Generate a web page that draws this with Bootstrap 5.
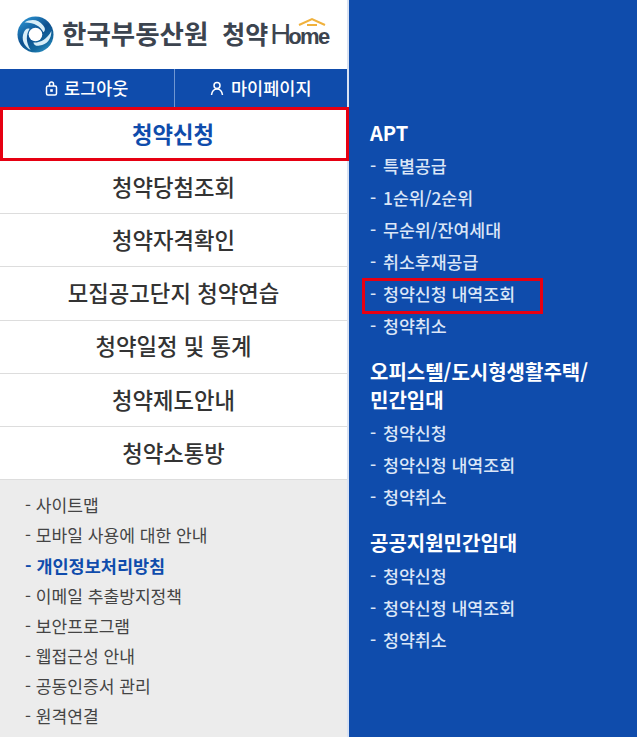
<!DOCTYPE html>
<html lang="ko">
<head>
<meta charset="utf-8">
<title>청약Home</title>
<link href="https://cdn.jsdelivr.net/npm/bootstrap@5.3.0/dist/css/bootstrap.min.css" rel="stylesheet">
<style>
html,body{height:737px;overflow:hidden}
body{font-family:"Noto Sans CJK KR","Noto Sans",sans-serif;background:#0f4cac;color:#333}
.shell{height:737px}
.leftcol{width:349px;flex:none;background:#fff;border-right:2px solid #d9e2f2}
.brandbar{height:69px;padding-left:17px;gap:8px}
.brandname{font-size:26.5px;font-weight:700;color:#3c444f;line-height:1;white-space:nowrap;display:flex;align-items:baseline}
.brandsub{margin-left:14px;margin-right:2px;font-size:25px}
.brandh{font-family:"Liberation Sans",sans-serif;font-weight:400;font-size:29px;letter-spacing:-3px}
.brandome{font-family:"Liberation Sans",sans-serif;font-weight:700;font-size:22px;letter-spacing:-1.6px}
.homeword{position:relative;display:inline-block}
.roof{position:absolute;right:3px;top:-3px}
.authbar{height:38px;background:#0f4cac}
.authlink{flex:1 1 50%;color:#fff;text-decoration:none;font-size:17.5px;font-weight:500;gap:6px}
.authlink+.authlink{border-left:1px solid #6f96d2;gap:7px}
.menuitem{display:flex;align-items:center;justify-content:center;height:53.2px;padding-bottom:1px;font-size:22.3px;font-weight:500;color:#333;text-decoration:none;border-bottom:1px solid #ddd}
.menuitem.current{color:#0f4cac;border:3px solid #e60012;font-weight:700;height:54px;margin-right:-2px;padding:0 3px 1px 0}
.footmenu{background:#ececec;flex:1;padding:10px 0 0 25px;border-top:1px solid #ddd;margin-top:-1px}
.footmenu a{display:block;height:30.2px;line-height:30px;font-size:17.1px;color:#444;text-decoration:none;white-space:nowrap}
.footmenu a.on{color:#0f4cac;font-weight:700;font-size:17.5px}
.rightcol{flex:1;color:#fff;padding:119px 0 0 21px;background:#0f4cac}
.grouptitle{font-size:20px;font-weight:700;line-height:28px;margin:0 0 3px;color:#fff}
.sublink{display:block;height:32px;line-height:32px;font-size:17.3px;font-weight:500;color:#dbe6f7;text-decoration:none;white-space:nowrap}
.sublink::first-letter{letter-spacing:2px}
.sublink.boxed{position:relative}
.boxed::after{content:"";position:absolute;left:-8px;top:0;width:181px;height:36px;border:3px solid #e60012;pointer-events:none}
.groupblock{margin-bottom:16px}
</style>
</head>
<body>
<div class="shell d-flex">
  <div class="leftcol d-flex flex-column">
    <div class="brandbar d-flex align-items-center">
      <svg width="37" height="37" viewBox="0 0 38 38">
        <defs><linearGradient id="lg" x1=".1" y1="0" x2=".8" y2="1"><stop offset="0" stop-color="#2e9ad8"/><stop offset=".5" stop-color="#0d4f8e"/><stop offset=".8" stop-color="#14699f"/><stop offset="1" stop-color="#2c93c6"/></linearGradient></defs>
        <circle cx="19" cy="19" r="18.5" fill="url(#lg)"/>
        <g fill="#d8eef8">
          <path d="M13 13C9 19 9 27 14 35 7 31 4 24 7 17 8 14 10 12 13 13z"/>
          <path d="M13 13C9 19 9 27 14 35 7 31 4 24 7 17 8 14 10 12 13 13z" transform="rotate(120 19 19)"/>
          <path d="M13 13C9 19 9 27 14 35 7 31 4 24 7 17 8 14 10 12 13 13z" transform="rotate(240 19 19)"/>
        </g>
        <circle cx="19" cy="19" r="7" fill="#fff"/>
      </svg>
      <div class="brandname">한국부동산원<span class="brandsub">청약</span><span class="homeword"><span class="brandh">H</span><span class="brandome">ome</span><svg class="roof" width="28" height="10" viewBox="0 0 28 10"><path d="M1 8 14 2l13 6" fill="none" stroke="#f0b13c" stroke-width="2"/><path d="M9 8h10" stroke="#f0b13c" stroke-width="2"/></svg></span></div>
    </div>
    <div class="authbar d-flex">
      <a class="authlink d-flex align-items-center justify-content-center" href="#">
        <svg width="13" height="15" viewBox="0 0 13 15" fill="none" stroke="#fff" stroke-width="1.5"><rect x="1.5" y="5" width="10" height="9" rx="1.5"/><path d="M4.5 5V3a2 2 0 0 1 4 0V5"/><rect x="5.2" y="8.2" width="2.6" height="2.6" fill="#fff" stroke="none"/></svg>로그아웃</a>
      <a class="authlink d-flex align-items-center justify-content-center" href="#">
        <svg width="14" height="15" viewBox="0 0 14 15" fill="none" stroke="#fff" stroke-width="1.5"><circle cx="7" cy="4.5" r="3"/><path d="M1.5 14c.5-3.5 2.5-6 5.5-6s5 2.5 5.5 6"/></svg>마이페이지</a>
    </div>
    <nav class="d-flex flex-column">
      <a class="menuitem current" href="#">청약신청</a>
      <a class="menuitem" href="#">청약당첨조회</a>
      <a class="menuitem" href="#">청약자격확인</a>
      <a class="menuitem" href="#">모집공고단지 청약연습</a>
      <a class="menuitem" href="#">청약일정 및 통계</a>
      <a class="menuitem" href="#">청약제도안내</a>
      <a class="menuitem" href="#">청약소통방</a>
    </nav>
    <div class="footmenu">
      <a href="#">- 사이트맵</a>
      <a href="#">- 모바일 사용에 대한 안내</a>
      <a href="#" class="on">- 개인정보처리방침</a>
      <a href="#">- 이메일 추출방지정책</a>
      <a href="#">- 보안프로그램</a>
      <a href="#">- 웹접근성 안내</a>
      <a href="#">- 공동인증서 관리</a>
      <a href="#">- 원격연결</a>
    </div>
  </div>
  <div class="rightcol">
    <div class="groupblock">
      <h2 class="grouptitle">APT</h2>
      <a class="sublink" href="#">- 특별공급</a>
      <a class="sublink" href="#">- 1순위/2순위</a>
      <a class="sublink" href="#">- 무순위/잔여세대</a>
      <a class="sublink" href="#">- 취소후재공급</a>
      <a class="sublink boxed" href="#">- 청약신청 내역조회</a>
      <a class="sublink" href="#">- 청약취소</a>
    </div>
    <div class="groupblock">
      <h2 class="grouptitle">오피스텔/도시형생활주택/<br>민간임대</h2>
      <a class="sublink" href="#">- 청약신청</a>
      <a class="sublink" href="#">- 청약신청 내역조회</a>
      <a class="sublink" href="#">- 청약취소</a>
    </div>
    <div class="groupblock">
      <h2 class="grouptitle">공공지원민간임대</h2>
      <a class="sublink" href="#">- 청약신청</a>
      <a class="sublink" href="#">- 청약신청 내역조회</a>
      <a class="sublink" href="#">- 청약취소</a>
    </div>
  </div>
</div>
<script src="https://cdn.jsdelivr.net/npm/bootstrap@5.3.0/dist/js/bootstrap.bundle.min.js"></script>
</body>
</html>
